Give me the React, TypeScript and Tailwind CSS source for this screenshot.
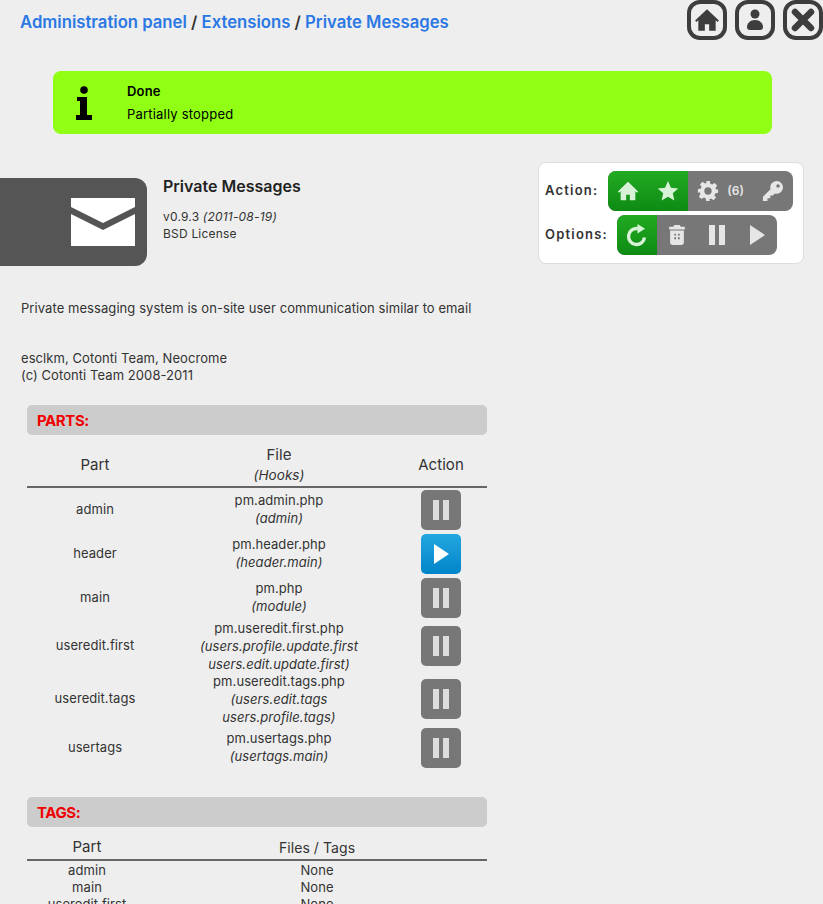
import type { ReactNode } from "react";

const HomeIcon = ({ className }: { className: string }) => (
  <svg viewBox="0 0 24 24" className={className} fill="currentColor">
    <path d="M12 2 1 12.500l1.200 1.300L4 12.200V22h6v-6h4v6h6v-9.800l1.800 1.600 1.200-1.300z" />
  </svg>
);

const StarIcon = () => (
  <svg viewBox="0 0 24 24" className="h-[22px] w-[22px]" fill="currentColor">
    <path d="m12 1 3.200 7.400 8 .8-6 5.300 1.800 7.900-7-4.100-7 4.100 1.800-7.900-6-5.300 8-.8z" />
  </svg>
);

const GearIcon = () => (
  <svg viewBox="0 0 24 24" className="h-[22px] w-[22px]" fill="currentColor">
    <path
      fillRule="evenodd"
      d="M10 1h4l.6 3.200 1.900.8 2.700-1.800 2.800 2.800-1.800 2.700.8 1.900L23 10v4l-3.200.6-.8 1.900 1.800 2.700-2.800 2.800-2.700-1.800-1.900.8L14 23h-4l-.6-3.200-1.900-.8-2.700 1.800-2.800-2.800 1.800-2.700-.8-1.900L1 14v-4l3.200-.6.8-1.900-1.800-2.700L6 2l2.700 1.800 1.900-.8zM12 8a4 4 0 1 0 0 8 4 4 0 0 0 0-8z"
    />
  </svg>
);

const KeyIcon = () => (
  <svg viewBox="0 0 24 24" className="h-[22px] w-[22px]" fill="currentColor">
    <path
      fillRule="evenodd"
      d="M16 1a7 7 0 0 0-6.700 9L1 18.300V23h5v-3h3v-3h3l1.900-2.300A7 7 0 1 0 16 1zm1.500 3.500a2 2 0 1 1 0 4 2 2 0 0 1 0-4z"
    />
  </svg>
);

const RefreshIcon = () => (
  <svg viewBox="0 0 24 24" className="h-6 w-6" fill="none" stroke="currentColor" strokeWidth="3.400">
    <path d="M19.500 14.500A8 8 0 1 1 13 5.600" />
    <path d="M12.500 1v9.500L20 5.800z" fill="currentColor" stroke="none" />
  </svg>
);

const TrashIcon = () => (
  <svg viewBox="0 0 24 24" className="h-[22px] w-[22px]" fill="currentColor">
    <path
      fillRule="evenodd"
      d="M9 1h6l1 2h4.500v3h-17V3H8zM4.500 7h15v13a3 3 0 0 1-3 3h-9a3 3 0 0 1-3-3zM9 10.500v2h2v-2zm4 0v2h2v-2zm-4 4v2h2v-2zm4 0v2h2v-2z"
    />
  </svg>
);

const PauseIcon = () => (
  <div className="flex gap-[4px]">
    <div className="h-5 w-[6px] bg-current" />
    <div className="h-5 w-[6px] bg-current" />
  </div>
);

const PlayIcon = () => (
  <svg viewBox="0 0 15 20" className="ml-px h-5 w-[15px]" fill="currentColor">
    <path d="M0 0 15 10 0 20z" />
  </svg>
);

const TopButton = ({ children }: { children: ReactNode }) => (
  <div className="flex h-10 w-10 items-center justify-center rounded-[13px] border-[4px] border-[#3d3d3d] text-[#3d3d3d]">
    {children}
  </div>
);

const Segment = ({
  children,
  green,
  className,
}: {
  children: ReactNode;
  green?: boolean;
  className: string;
}) => (
  <div
    className={`flex h-10 items-center ${
      green
        ? "bg-gradient-to-b from-[#22ab22] to-[#0d8a14] text-[#d8f2d8]"
        : "text-[#e6e6e6]"
    } ${className}`}
  >
    {children}
  </div>
);

const ActionButton = ({ on }: { on?: boolean }) => (
  <div
    className={`mx-auto flex h-10 w-10 items-center justify-center rounded-[5px] ${
      on
        ? "bg-gradient-to-b from-[#22a7e0] to-[#0084c9] text-white"
        : "bg-[#777777] text-[#dddddd]"
    }`}
  >
    {on ? <PlayIcon /> : <PauseIcon />}
  </div>
);

const SectionBar = ({ title }: { title: string }) => (
  <div className="flex h-[30px] items-center rounded-[5px] bg-[#cccccc] pl-[10px] pt-[2px] text-[15px] font-bold tracking-[-0.4px] text-[#f00000]">
    {title}
  </div>
);

const parts = [
  { part: "admin", file: "pm.admin.php", hooks: ["(admin)"], h: "h-[44px]" },
  { part: "header", file: "pm.header.php", hooks: ["(header.main)"], h: "h-[44px]", on: true },
  { part: "main", file: "pm.php", hooks: ["(module)"], h: "h-[44px]" },
  {
    part: "useredit.first",
    file: "pm.useredit.first.php",
    hooks: ["(users.profile.update.first", "users.edit.update.first)"],
    h: "h-[52px]",
  },
  {
    part: "useredit.tags",
    file: "pm.useredit.tags.php",
    hooks: ["(users.edit.tags", "users.profile.tags)"],
    h: "h-[54px]",
  },
  { part: "usertags", file: "pm.usertags.php", hooks: ["(usertags.main)"], h: "h-[44px]" },
];

export default function App() {
  return (
    <div className="h-[904px] overflow-hidden bg-[#eeeeee] font-['Inter',sans-serif] text-[13px] tracking-[0.07px] text-[#333333]">
      <div className="flex h-[71px] items-start justify-between pl-5">
        <div className="pt-[10px] text-[16.700px] font-semibold leading-6 tracking-normal text-[#333333]">
          <span className="text-[#2b78e4]">Administration panel</span> /{" "}
          <span className="text-[#2b78e4]">Extensions</span> /{" "}
          <span className="text-[#2b78e4]">Private Messages</span>
        </div>
        <div className="flex gap-2">
          <TopButton>
            <HomeIcon className="h-[26px] w-[26px] shrink-0" />
          </TopButton>
          <TopButton>
            <svg viewBox="0 0 24 24" className="h-6 w-6" fill="currentColor">
              <circle cx="12" cy="6" r="4.500" />
              <path d="M12 12c5 0 8 3.500 8 7 0 2-1 3-3 3H7c-2 0-3-1-3-3 0-3.500 3-7 8-7z" />
            </svg>
          </TopButton>
          <TopButton>
            <svg viewBox="0 0 24 24" className="h-6 w-6" stroke="currentColor" strokeWidth="6.500" strokeLinecap="round">
              <path d="M4 4 20 20M20 4 4 20" />
            </svg>
          </TopButton>
        </div>
      </div>

      <div className="ml-[53px] flex h-[63px] w-[719px] items-center rounded-lg bg-[#90ff13] text-black">
        <div className="w-[74px] pl-[22px]">
          <svg viewBox="0 0 16 34" className="h-[34px] w-[18px]" fill="currentColor">
            <circle cx="8" cy="4" r="3.800" />
            <path d="M1 11h10v18h5v5H0v-5h4V15H1z" />
          </svg>
        </div>
        <div className="tracking-[0.2px]">
          <div className="mb-[7px] font-semibold leading-4">Done</div>
          <div className="leading-4">Partially stopped</div>
        </div>
      </div>

      <div className="mt-7 flex items-start">
        <div className="mt-[16px] flex h-[88px] w-[147px] items-center justify-end rounded-r-xl bg-[#555555] pr-3">
          <svg viewBox="0 0 64 48" className="h-12 w-16" fill="#ffffff">
            <path d="M0 0h64v9L32 25 0 9zM0 16l32 16 32-16v32H0z" />
          </svg>
        </div>
        <div className="ml-4 w-[375px] pt-[14px]">
          <div className="text-[16px] font-semibold leading-5 tracking-normal text-[#222222]">Private Messages</div>
          <div className="mt-[12px] text-[12px] leading-[17px] tracking-[0.2px]">
            v0.9.3 <i>(2011-08-19)</i>
            <br />
            BSD License
          </div>
        </div>
        <div className="flex h-[102px] w-[266px] flex-col justify-center gap-1 rounded-lg border border-[#dddddd] bg-white pl-[6px] font-semibold tracking-[1.200px]">
          <div className="flex items-center gap-[10px]">
            <span>Action:</span>
            <div className="flex w-[185px] overflow-hidden rounded-lg bg-[#777777]">
              <Segment green className="w-10 justify-center">
                <HomeIcon className="h-[22px] w-[22px]" />
              </Segment>
              <Segment green className="w-10 justify-center">
                <StarIcon />
              </Segment>
              <Segment className="w-[60px] gap-[8px] pl-[9px]">
                <GearIcon />
                <span className="text-[12px] tracking-normal">(6)</span>
              </Segment>
              <Segment className="w-[45px] justify-center pl-1">
                <KeyIcon />
              </Segment>
            </div>
          </div>
          <div className="flex items-center gap-[9px]">
            <span>Options:</span>
            <div className="flex w-[160px] overflow-hidden rounded-lg bg-[#777777]">
              <Segment green className="w-10 justify-center">
                <RefreshIcon />
              </Segment>
              <Segment className="w-10 justify-center">
                <TrashIcon />
              </Segment>
              <Segment className="w-10 justify-center">
                <PauseIcon />
              </Segment>
              <Segment className="w-10 justify-center">
                <PlayIcon />
              </Segment>
            </div>
          </div>
        </div>
      </div>

      <div className="ml-[21px] mt-[34px] leading-4">
        Private messaging system is on-site user communication similar to email
      </div>
      <div className="ml-[21px] mt-[34px] leading-[17px]">
        esclkm, Cotonti Team, Neocrome
        <br />
        (c) Cotonti Team 2008-2011
      </div>

      <div className="ml-[27px] mt-[21px] w-[460px]">
        <SectionBar title="PARTS:" />
        <div className="mt-[5px] grid h-[48px] grid-cols-[136px_232px_92px] items-center border-b-2 border-[#666666] pt-[4px] text-center text-[15px] leading-5">
          <div>Part</div>
          <div>
            File
            <br />
            <i className="text-[13.500px]">(Hooks)</i>
          </div>
          <div>Action</div>
        </div>
        {parts.map((row) => (
          <div
            key={row.part}
            className={`grid grid-cols-[136px_232px_92px] grid-rows-[100%] items-center text-center ${row.h}`}
          >
            <div>{row.part}</div>
            <div className={`leading-[18px] ${row.hooks.length === 1 ? "mb-[2px]" : ""}`}>
              <div>{row.file}</div>
              {row.hooks.map((hook) => (
                <div key={hook}>
                  <i>{hook}</i>
                </div>
              ))}
            </div>
            <ActionButton on={row.on} />
          </div>
        ))}

        <div className="mt-[27px]">
          <SectionBar title="TAGS:" />
        </div>
        <div className="mt-[5px] grid h-[29px] grid-cols-[120px_340px] items-center border-b-2 border-[#666666] pt-[4px] text-center text-[15px]">
          <div>Part</div>
          <div className="text-[14px]">Files / Tags</div>
        </div>
        {["admin", "main", "useredit.first"].map((part) => (
          <div key={part} className="grid h-[17px] grid-cols-[120px_340px] items-center text-center">
            <div>{part}</div>
            <div>None</div>
          </div>
        ))}
      </div>
    </div>
  );
}
